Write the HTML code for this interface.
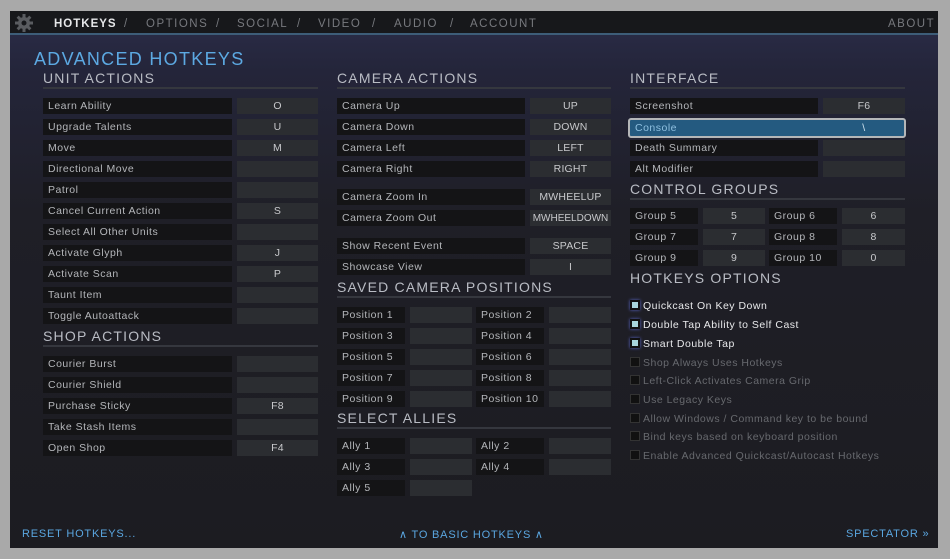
<!DOCTYPE html>
<html><head><meta charset="utf-8"><style>
*{margin:0;padding:0;box-sizing:border-box}
body{width:950px;height:559px;background:#a9a9a9;position:relative;overflow:hidden;font-family:"Liberation Sans",sans-serif}
#p{position:absolute;left:10px;top:11px;width:928px;height:537px;background:linear-gradient(#2b2d4a 0px,#24253a 60px,#1f1f27 200px,#1c1c21 537px)}
#top{position:absolute;left:10px;top:11px;width:928px;height:24px;background:#17181b;border-bottom:2px solid #3d5d78}
.nav{position:absolute;top:18px;font-size:11.5px;letter-spacing:1.5px;color:#77797e}
.a{position:absolute;font-size:10.5px;letter-spacing:.5px;line-height:17px;height:16px;white-space:nowrap;overflow:hidden}
.l{background:#141416;color:#b4b6ba;padding-left:5px}
.k{background:#2b2d31;color:#c8c9cc;text-align:center;letter-spacing:.2px}
.h{position:absolute;font-size:14px;letter-spacing:1.2px;color:#b9bcc4;border-bottom:2px solid #35373e;padding-bottom:1px}
.cb{position:absolute;font-size:10.5px;letter-spacing:.5px;color:#67696e;white-space:nowrap}
.cb i{display:inline-block;width:10px;height:10px;background:#111;border:1px solid #333;margin-right:3px;vertical-align:-1px}
.cb.on{color:#e8e9eb}
.cb.on i{background:#a8d6dc;border:2px solid #111;box-shadow:0 0 3px #5a66c8}
.bt{position:absolute;top:528px;font-size:11px;letter-spacing:.8px;color:#5aa6e0}
</style></head><body>
<div id="p"></div><div id="top"></div>
<svg style="position:absolute;left:15px;top:14px" width="18" height="18" viewBox="0 0 18 18"><g fill="#5a5c60"><circle cx="9" cy="9" r="6"/><rect x="7.5" y="0" width="3" height="18"/><rect x="0" y="7.5" width="18" height="3"/><rect x="7.5" y="0" width="3" height="18" transform="rotate(45 9 9)"/><rect x="7.5" y="0" width="3" height="18" transform="rotate(-45 9 9)"/></g><circle cx="9" cy="9" r="2.5" fill="#17181b"/></svg>
<div class="nav" style="left:54px;color:#e6e7e9;font-weight:bold;letter-spacing:1px">HOTKEYS</div>
<div class="nav" style="left:124px">/</div>
<div class="nav" style="left:146px">OPTIONS</div>
<div class="nav" style="left:216px">/</div>
<div class="nav" style="left:237px">SOCIAL</div>
<div class="nav" style="left:297px">/</div>
<div class="nav" style="left:318px">VIDEO</div>
<div class="nav" style="left:372px">/</div>
<div class="nav" style="left:394px">AUDIO</div>
<div class="nav" style="left:450px">/</div>
<div class="nav" style="left:470px">ACCOUNT</div>
<div class="nav" style="left:888px">ABOUT</div>
<div style="position:absolute;left:34px;top:49px;font-size:18px;letter-spacing:1.3px;color:#5ca9e2">ADVANCED HOTKEYS</div>

<div class="h" style="left:43px;top:70px;width:275px">UNIT ACTIONS</div>
<div class="h" style="left:337px;top:70px;width:274px">CAMERA ACTIONS</div>
<div class="h" style="left:630px;top:70px;width:275px">INTERFACE</div>

<div class="a l" style="left:43px;top:98px;width:189px">Learn Ability</div><div class="a k" style="left:237px;top:98px;width:81px">O</div>
<div class="a l" style="left:43px;top:119px;width:189px">Upgrade Talents</div><div class="a k" style="left:237px;top:119px;width:81px">U</div>
<div class="a l" style="left:43px;top:140px;width:189px">Move</div><div class="a k" style="left:237px;top:140px;width:81px">M</div>
<div class="a l" style="left:43px;top:161px;width:189px">Directional Move</div><div class="a k" style="left:237px;top:161px;width:81px"></div>
<div class="a l" style="left:43px;top:182px;width:189px">Patrol</div><div class="a k" style="left:237px;top:182px;width:81px"></div>
<div class="a l" style="left:43px;top:203px;width:189px">Cancel Current Action</div><div class="a k" style="left:237px;top:203px;width:81px">S</div>
<div class="a l" style="left:43px;top:224px;width:189px">Select All Other Units</div><div class="a k" style="left:237px;top:224px;width:81px"></div>
<div class="a l" style="left:43px;top:245px;width:189px">Activate Glyph</div><div class="a k" style="left:237px;top:245px;width:81px">J</div>
<div class="a l" style="left:43px;top:266px;width:189px">Activate Scan</div><div class="a k" style="left:237px;top:266px;width:81px">P</div>
<div class="a l" style="left:43px;top:287px;width:189px">Taunt Item</div><div class="a k" style="left:237px;top:287px;width:81px"></div>
<div class="a l" style="left:43px;top:308px;width:189px">Toggle Autoattack</div><div class="a k" style="left:237px;top:308px;width:81px"></div>

<div class="h" style="left:43px;top:328px;width:275px">SHOP ACTIONS</div>
<div class="a l" style="left:43px;top:356px;width:189px">Courier Burst</div><div class="a k" style="left:237px;top:356px;width:81px"></div>
<div class="a l" style="left:43px;top:377px;width:189px">Courier Shield</div><div class="a k" style="left:237px;top:377px;width:81px"></div>
<div class="a l" style="left:43px;top:398px;width:189px">Purchase Sticky</div><div class="a k" style="left:237px;top:398px;width:81px">F8</div>
<div class="a l" style="left:43px;top:419px;width:189px">Take Stash Items</div><div class="a k" style="left:237px;top:419px;width:81px"></div>
<div class="a l" style="left:43px;top:440px;width:189px">Open Shop</div><div class="a k" style="left:237px;top:440px;width:81px">F4</div>

<div class="a l" style="left:337px;top:98px;width:188px">Camera Up</div><div class="a k" style="left:530px;top:98px;width:81px">UP</div>
<div class="a l" style="left:337px;top:119px;width:188px">Camera Down</div><div class="a k" style="left:530px;top:119px;width:81px">DOWN</div>
<div class="a l" style="left:337px;top:140px;width:188px">Camera Left</div><div class="a k" style="left:530px;top:140px;width:81px">LEFT</div>
<div class="a l" style="left:337px;top:161px;width:188px">Camera Right</div><div class="a k" style="left:530px;top:161px;width:81px">RIGHT</div>
<div class="a l" style="left:337px;top:189px;width:188px">Camera Zoom In</div><div class="a k" style="left:530px;top:189px;width:81px">MWHEELUP</div>
<div class="a l" style="left:337px;top:210px;width:188px">Camera Zoom Out</div><div class="a k" style="left:530px;top:210px;width:81px;font-size:10px;letter-spacing:0">MWHEELDOWN</div>
<div class="a l" style="left:337px;top:238px;width:188px">Show Recent Event</div><div class="a k" style="left:530px;top:238px;width:81px">SPACE</div>
<div class="a l" style="left:337px;top:259px;width:188px">Showcase View</div><div class="a k" style="left:530px;top:259px;width:81px">I</div>

<div class="h" style="left:337px;top:279px;width:274px">SAVED CAMERA POSITIONS</div>
<div class="a l" style="left:337px;top:307px;width:68px">Position 1</div><div class="a k" style="left:410px;top:307px;width:62px"></div><div class="a l" style="left:476px;top:307px;width:68px">Position 2</div><div class="a k" style="left:549px;top:307px;width:62px"></div>
<div class="a l" style="left:337px;top:328px;width:68px">Position 3</div><div class="a k" style="left:410px;top:328px;width:62px"></div><div class="a l" style="left:476px;top:328px;width:68px">Position 4</div><div class="a k" style="left:549px;top:328px;width:62px"></div>
<div class="a l" style="left:337px;top:349px;width:68px">Position 5</div><div class="a k" style="left:410px;top:349px;width:62px"></div><div class="a l" style="left:476px;top:349px;width:68px">Position 6</div><div class="a k" style="left:549px;top:349px;width:62px"></div>
<div class="a l" style="left:337px;top:370px;width:68px">Position 7</div><div class="a k" style="left:410px;top:370px;width:62px"></div><div class="a l" style="left:476px;top:370px;width:68px">Position 8</div><div class="a k" style="left:549px;top:370px;width:62px"></div>
<div class="a l" style="left:337px;top:391px;width:68px">Position 9</div><div class="a k" style="left:410px;top:391px;width:62px"></div><div class="a l" style="left:476px;top:391px;width:68px">Position 10</div><div class="a k" style="left:549px;top:391px;width:62px"></div>

<div class="h" style="left:337px;top:410px;width:274px">SELECT ALLIES</div>
<div class="a l" style="left:337px;top:438px;width:68px">Ally 1</div><div class="a k" style="left:410px;top:438px;width:62px"></div><div class="a l" style="left:476px;top:438px;width:68px">Ally 2</div><div class="a k" style="left:549px;top:438px;width:62px"></div>
<div class="a l" style="left:337px;top:459px;width:68px">Ally 3</div><div class="a k" style="left:410px;top:459px;width:62px"></div><div class="a l" style="left:476px;top:459px;width:68px">Ally 4</div><div class="a k" style="left:549px;top:459px;width:62px"></div>
<div class="a l" style="left:337px;top:480px;width:68px">Ally 5</div><div class="a k" style="left:410px;top:480px;width:62px"></div>

<div class="a l" style="left:630px;top:98px;width:188px">Screenshot</div><div class="a k" style="left:823px;top:98px;width:82px">F6</div>
<div style="position:absolute;left:628px;top:118px;width:278px;height:20px;border:2px solid #b4b6b8;border-radius:3px;background:#245a80"></div>
<div class="a" style="left:635px;top:120px;color:#8fc0e0">Console</div><div class="a" style="left:823px;top:120px;width:82px;text-align:center;color:#d0e4f0">\</div>
<div class="a l" style="left:630px;top:140px;width:188px">Death Summary</div><div class="a k" style="left:823px;top:140px;width:82px"></div>
<div class="a l" style="left:630px;top:161px;width:188px">Alt Modifier</div><div class="a k" style="left:823px;top:161px;width:82px"></div>

<div class="h" style="left:630px;top:181px;width:275px">CONTROL GROUPS</div>
<div class="a l" style="left:630px;top:208px;width:68px">Group 5</div><div class="a k" style="left:703px;top:208px;width:62px">5</div><div class="a l" style="left:769px;top:208px;width:68px">Group 6</div><div class="a k" style="left:842px;top:208px;width:63px">6</div>
<div class="a l" style="left:630px;top:229px;width:68px">Group 7</div><div class="a k" style="left:703px;top:229px;width:62px">7</div><div class="a l" style="left:769px;top:229px;width:68px">Group 8</div><div class="a k" style="left:842px;top:229px;width:63px">8</div>
<div class="a l" style="left:630px;top:250px;width:68px">Group 9</div><div class="a k" style="left:703px;top:250px;width:62px">9</div><div class="a l" style="left:769px;top:250px;width:68px">Group 10</div><div class="a k" style="left:842px;top:250px;width:63px">0</div>

<div class="h" style="left:630px;top:270px;width:275px;border-bottom:none">HOTKEYS OPTIONS</div>
<div class="cb on" style="left:630px;top:300px"><i></i>Quickcast On Key Down</div>
<div class="cb on" style="left:630px;top:319px"><i></i>Double Tap Ability to Self Cast</div>
<div class="cb on" style="left:630px;top:338px"><i></i>Smart Double Tap</div>
<div class="cb" style="left:630px;top:357px"><i></i>Shop Always Uses Hotkeys</div>
<div class="cb" style="left:630px;top:375px"><i></i>Left-Click Activates Camera Grip</div>
<div class="cb" style="left:630px;top:394px"><i></i>Use Legacy Keys</div>
<div class="cb" style="left:630px;top:413px"><i></i>Allow Windows / Command key to be bound</div>
<div class="cb" style="left:630px;top:431px"><i></i>Bind keys based on keyboard position</div>
<div class="cb" style="left:630px;top:450px"><i></i>Enable Advanced Quickcast/Autocast Hotkeys</div>

<div class="bt" style="left:22px">RESET HOTKEYS...</div>
<div class="bt" style="left:399px">∧ TO BASIC HOTKEYS ∧</div>
<div class="bt" style="left:846px">SPECTATOR »</div>
</body></html>
